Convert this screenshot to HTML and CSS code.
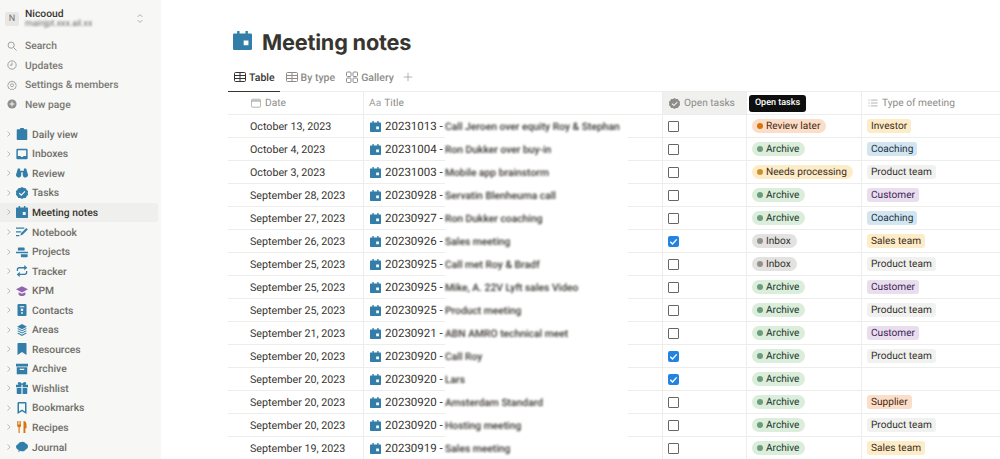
FILE: index.html
```html
<!DOCTYPE html>
<html lang="en">
<head>
<meta charset="utf-8">
<title>Meeting notes</title>
<link rel="stylesheet" href="styles.css">
</head>
<body>
<svg class="defs" width="0" height="0" aria-hidden="true">
  <defs>
    <symbol id="i-cal" viewBox="0 0 16 16"><path fill-rule="evenodd" d="M3.500 0h2v2h5V0h2v2H15a1 1 0 0 1 1 1v12a1 1 0 0 1-1 1H1a1 1 0 0 1-1-1V3a1 1 0 0 1 1-1h2.500zM9 8v4h4V8z"/></symbol>
    <symbol id="i-clip" viewBox="0 0 16 16"><path d="M5.500 0h5v1.500H14a1 1 0 0 1 1 1V15a1 1 0 0 1-1 1H2a1 1 0 0 1-1-1V2.500a1 1 0 0 1 1-1h3.500z"/></symbol>
    <symbol id="i-inbox" viewBox="0 0 16 16"><path fill-rule="evenodd" d="M2 1h12a1.500 1.500 0 0 1 1.500 1.500v11A1.500 1.500 0 0 1 14 15H2a1.500 1.500 0 0 1-1.500-1.500v-11A1.500 1.500 0 0 1 2 1zm.500 2v7.500h3.500L7 12h2l1-1.500h3.500V3z"/></symbol>
    <symbol id="i-bino" viewBox="0 0 16 16"><path d="M2.500 2h3v3h5V2h3l2.300 7.500a3.500 3.500 0 1 1-6.800 1V7H7v3.500a3.500 3.500 0 1 1-6.800-1z"/></symbol>
    <symbol id="i-badge" viewBox="0 0 16 16"><path fill-rule="evenodd" d="M8 0l2.300 1.400 2.700.1 1.300 2.400 2 1.800-.7 2.300.7 2.300-2 1.800-1.300 2.400-2.700.1L8 16l-2.300-1.400-2.700-.1-1.300-2.400-2-1.800.7-2.300L-.3 5.700l2-1.800L3 1.500l2.700-.1zM11.500 5.300L7 9.700 4.800 7.600l-1.100 1.100L7 12l5.600-5.600z"/></symbol>
    <symbol id="i-note" viewBox="0 0 16 16"><path d="M0 2h11v1.700H0zM0 7h7v1.700H0zM0 12h4.500v1.700H0zM13.700 2.500l2 2-7 7.300-3 1 1-3z"/></symbol>
    <symbol id="i-proj" viewBox="0 0 16 16"><path d="M3.500 2h7a1 1 0 0 1 1 1v3h-9V3a1 1 0 0 1 1-1zM0 7.500h16v2H0zM6.500 11h9v3a1 1 0 0 1-1 1h-7a1 1 0 0 1-1-1z"/></symbol>
    <symbol id="i-loop" viewBox="0 0 16 16"><path d="M11 0l4 3.500L11 7V4.500H4.500A1.800 1.800 0 0 0 2.700 6.300V8H1V6.300a3.500 3.500 0 0 1 3.500-3.500H11zM5 16l-4-3.500L5 9v2.500h6.500a1.800 1.800 0 0 0 1.800-1.800V8H15v1.700a3.500 3.500 0 0 1-3.500 3.500H5z"/></symbol>
    <symbol id="i-grad" viewBox="0 0 16 16"><path d="M8 1.500l8 4.200-8 4.200-8-4.200zM3.500 9.500L8 11.800l4.500-2.300V13c-1 1.200-2.700 1.800-4.500 1.800S4.500 14.200 3.500 13z"/></symbol>
    <symbol id="i-contact" viewBox="0 0 16 16"><path fill-rule="evenodd" d="M3.500 0h9A1.500 1.500 0 0 1 14 1.500v13a1.500 1.500 0 0 1-1.500 1.500h-9A1.500 1.500 0 0 1 2 14.500v-13A1.500 1.500 0 0 1 3.500 0zM5 3v1.300h6V3zM8 6a1.800 1.800 0 1 0 0 3.600A1.800 1.800 0 0 0 8 6zM6.800 11v2h2.400v-2z"/></symbol>
    <symbol id="i-stack" viewBox="0 0 16 16"><path d="M8 0l6.500 3.500L8 7 1.500 3.500zM1.500 6.300L3 5.500l5 2.700 5-2.700 1.500.8L8 9.800zM1.500 9.300l1.500-.8 5 2.700 5-2.700 1.500.8L8 12.800zM1.500 12.300l1.500-.8 5 2.700 5-2.700 1.500.8L8 16z"/></symbol>
    <symbol id="i-mark" viewBox="0 0 16 16"><path d="M3 0h10a1 1 0 0 1 1 1v15l-6-4-6 4V1a1 1 0 0 1 1-1z"/></symbol>
    <symbol id="i-box" viewBox="0 0 16 16"><path fill-rule="evenodd" d="M0 1h16v3.500H0zM1 5.500h14V15H1zM5 7.500v1.800h6V7.500z"/></symbol>
    <symbol id="i-gift" viewBox="0 0 16 16"><path d="M4 0c1.500 0 3 1 4 2.500C9 1 10.500 0 12 0c1.500 0 2 1.500 1.300 2.700-.2.300-.4.500-.7.800H16V7H8.800V3.500h-1.600V7H0V3.500h3.400c-.3-.3-.5-.5-.7-.8C2 1.500 2.500 0 4 0zM1 8h6.200v8H2a1 1 0 0 1-1-1zM8.800 8H15v7a1 1 0 0 1-1 1H8.800z"/></symbol>
    <symbol id="i-bookmark" viewBox="0 0 16 16"><path fill-rule="evenodd" d="M3.500 0h9A1.500 1.500 0 0 1 14 1.500V16l-6-3.800L2 16V1.500A1.500 1.500 0 0 1 3.500 0zM4 2v10.500l4-2.500 4 2.500V2z"/></symbol>
    <symbol id="i-fork" viewBox="0 0 16 16"><path d="M1.500 0h1v4.500h1V0h1.200v4.500h1V0h1v6a2.500 2.500 0 0 1-1.800 2.400V16H3.400V8.400A2.500 2.500 0 0 1 1.500 6zM10 0c2.500 0 4 2 4 5v4.500h-1.500V16h-2.500z"/></symbol>
    <symbol id="i-cloud" viewBox="0 0 16 16"><path d="M9 1c1.800 0 3.200 1 3.700 2.400 1.900.3 3.300 1.900 3.300 3.800 0 1.800-1.100 3.300-2.800 3.800-.7 1.700-2.400 2.800-4.400 2.800-1 0-2-.3-2.800-.8L3 15l.7-3C1.600 11.600 0 9.900 0 7.800c0-1.900 1.300-3.500 3-3.900C3.800 2.200 6 1 9 1z"/></symbol>
    <symbol id="i-check" viewBox="0 0 12 12"><path d="M2.500 6.300l2.400 2.400 4.600-5" fill="none" stroke="#fff" stroke-width="1.500"/></symbol>
    <symbol id="i-table" viewBox="0 0 12 12"><path fill="none" stroke="currentColor" d="M1.500 1.500h9a1 1 0 0 1 1 1v7a1 1 0 0 1-1 1h-9a1 1 0 0 1-1-1v-7a1 1 0 0 1 1-1zM.5 4.500h11M.5 7.500h11M6 1.500v9"/></symbol>
    <symbol id="i-gallery" viewBox="0 0 12 12"><g fill="none" stroke="currentColor"><rect x=".5" y="1" width="4.500" height="4.500" rx="1"/><rect x="7" y="1" width="4.500" height="4.500" rx="1"/><rect x=".5" y="7" width="4.500" height="4.500" rx="1"/><rect x="7" y="7" width="4.500" height="4.500" rx="1"/></g></symbol>
    <symbol id="i-chev" viewBox="0 0 8 10"><path d="M2 1.500L5.500 5 2 8.500" fill="none" stroke="currentColor" stroke-width="1"/></symbol>
  </defs>
</svg>

<div class="app">
  <aside class="sidebar">
    <div class="workspace">
      <span class="ws-badge">N</span>
      <div class="ws-text">
        <div class="ws-name">Nicooud</div>
        <div class="ws-mail">mainjpt.xxx.ail.xx</div>
      </div>
      <svg class="ws-switch" viewBox="0 0 10 14"><path d="M2 5l3-3 3 3M2 9l3 3 3-3" fill="none" stroke="currentColor"/></svg>
    </div>
    <nav class="quick">
      <a class="quick-item"><svg class="q-icon" viewBox="0 0 12 12"><circle cx="5" cy="5" r="3.700" fill="none" stroke="currentColor"/><path d="M8 8l3.500 3.500" stroke="currentColor"/></svg>Search</a>
      <a class="quick-item"><svg class="q-icon" viewBox="0 0 12 12"><circle cx="6" cy="6" r="5" fill="none" stroke="currentColor"/><path d="M6 3v3.200H3.500" fill="none" stroke="currentColor"/></svg>Updates</a>
      <a class="quick-item"><svg class="q-icon" viewBox="0 0 12 12"><path d="M6 1l1 1.300 1.700-.3.500 1.600 1.600.6-.4 1.600L11.500 7l-1.200 1.200.1 1.600-1.600.3L7.700 11.500 6 11l-1.700.5-1.100-1.400-1.600-.3.100-1.600L.5 7l1.100-1.200-.4-1.600 1.600-.6.500-1.600 1.700.3z" fill="none" stroke="currentColor" stroke-width=".9"/><circle cx="6" cy="6.300" r="1.800" fill="none" stroke="currentColor" stroke-width=".9"/></svg>Settings &amp; members</a>
      <a class="quick-item"><svg class="q-icon" viewBox="0 0 12 12"><circle cx="6" cy="6" r="5.500" fill="currentColor"/><path d="M6 3v6M3 6h6" stroke="#f7f7f5" stroke-width="1.200"/></svg>New page</a>
    </nav>
    <nav class="tree">
      <a class="tree-item"><svg class="chev"><use href="#i-chev"/></svg><svg class="t-icon blue"><use href="#i-clip"/></svg>Daily view</a>
      <a class="tree-item"><svg class="chev"><use href="#i-chev"/></svg><svg class="t-icon blue"><use href="#i-inbox"/></svg>Inboxes</a>
      <a class="tree-item"><svg class="chev"><use href="#i-chev"/></svg><svg class="t-icon blue"><use href="#i-bino"/></svg>Review</a>
      <a class="tree-item"><svg class="chev"><use href="#i-chev"/></svg><svg class="t-icon blue"><use href="#i-badge"/></svg>Tasks</a>
      <a class="tree-item active"><svg class="chev"><use href="#i-chev"/></svg><svg class="t-icon blue"><use href="#i-cal"/></svg>Meeting notes</a>
      <a class="tree-item"><svg class="chev"><use href="#i-chev"/></svg><svg class="t-icon blue"><use href="#i-note"/></svg>Notebook</a>
      <a class="tree-item"><svg class="chev"><use href="#i-chev"/></svg><svg class="t-icon blue"><use href="#i-proj"/></svg>Projects</a>
      <a class="tree-item"><svg class="chev"><use href="#i-chev"/></svg><svg class="t-icon blue"><use href="#i-loop"/></svg>Tracker</a>
      <a class="tree-item"><svg class="chev"><use href="#i-chev"/></svg><svg class="t-icon purple"><use href="#i-grad"/></svg>KPM</a>
      <a class="tree-item"><svg class="chev"><use href="#i-chev"/></svg><svg class="t-icon blue"><use href="#i-contact"/></svg>Contacts</a>
      <a class="tree-item"><svg class="chev"><use href="#i-chev"/></svg><svg class="t-icon blue"><use href="#i-stack"/></svg>Areas</a>
      <a class="tree-item"><svg class="chev"><use href="#i-chev"/></svg><svg class="t-icon blue"><use href="#i-mark"/></svg>Resources</a>
      <a class="tree-item"><svg class="chev"><use href="#i-chev"/></svg><svg class="t-icon blue"><use href="#i-box"/></svg>Archive</a>
      <a class="tree-item"><svg class="chev"><use href="#i-chev"/></svg><svg class="t-icon blue"><use href="#i-gift"/></svg>Wishlist</a>
      <a class="tree-item"><svg class="chev"><use href="#i-chev"/></svg><svg class="t-icon blue"><use href="#i-bookmark"/></svg>Bookmarks</a>
      <a class="tree-item"><svg class="chev"><use href="#i-chev"/></svg><svg class="t-icon orange"><use href="#i-fork"/></svg>Recipes</a>
      <a class="tree-item"><svg class="chev"><use href="#i-chev"/></svg><svg class="t-icon blue"><use href="#i-cloud"/></svg>Journal</a>
    </nav>
  </aside>

  <main class="main">
    <header class="page-head">
      <svg class="page-icon blue"><use href="#i-cal"/></svg>
      <h1 class="page-title">Meeting notes</h1>
    </header>
    <div class="tabs">
      <a class="tab on"><svg class="tab-icon"><use href="#i-table"/></svg>Table</a>
      <a class="tab"><svg class="tab-icon"><use href="#i-table"/></svg>By type</a>
      <a class="tab"><svg class="tab-icon"><use href="#i-gallery"/></svg>Gallery</a>
      <svg class="tab-plus" viewBox="0 0 12 12"><path d="M6 1v10M1 6h10" stroke="currentColor"/></svg>
    </div>

    <div class="table">
      <div class="row head">
        <div class="cell date"><svg class="h-icon" viewBox="0 0 12 12"><rect x=".5" y="1.500" width="11" height="9.500" rx="1.500" fill="none" stroke="currentColor"/><path d="M.5 3.500h11" stroke="currentColor" stroke-width="1.500"/></svg>Date</div>
        <div class="cell title-h"><span class="aa">Aa</span>Title</div>
        <div class="cell tasks-h"><svg class="h-icon solid"><use href="#i-badge"/></svg>Open tasks</div>
        <div class="cell status-h"><span class="tooltip">Open tasks</span></div>
        <div class="cell type-h"><svg class="h-icon" viewBox="0 0 12 12"><path d="M.5 2.500h1.500M.5 6h1.500M.5 9.500h1.500M3.500 2.500h8M3.500 6h8M3.500 9.500h8" stroke="currentColor"/></svg>Type of meeting</div>
      </div>

      <div class="row"><div class="cell date">October 13, 2023</div><div class="cell title"><svg class="r-icon blue"><use href="#i-cal"/></svg>20231013 -<span class="blur-zone"><span class="blurred">Call Jeroen over equity Roy &amp; Stephan</span></span></div><div class="cell check"><span class="box"></span></div><div class="cell"><span class="pill orange-p"><i class="dot"></i>Review later</span></div><div class="cell"><span class="tag t-yellow">Investor</span></div></div>
      <div class="row"><div class="cell date">October 4, 2023</div><div class="cell title"><svg class="r-icon blue"><use href="#i-cal"/></svg>20231004 -<span class="blur-zone"><span class="blurred">Ron Dukker over buy-in</span></span></div><div class="cell check"><span class="box"></span></div><div class="cell"><span class="pill green-p"><i class="dot"></i>Archive</span></div><div class="cell"><span class="tag t-blue">Coaching</span></div></div>
      <div class="row"><div class="cell date">October 3, 2023</div><div class="cell title"><svg class="r-icon blue"><use href="#i-cal"/></svg>20231003 -<span class="blur-zone"><span class="blurred">Mobile app brainstorm</span></span></div><div class="cell check"><span class="box"></span></div><div class="cell"><span class="pill yellow-p"><i class="dot"></i>Needs processing</span></div><div class="cell"><span class="tag t-gray">Product team</span></div></div>
      <div class="row"><div class="cell date">September 28, 2023</div><div class="cell title"><svg class="r-icon blue"><use href="#i-cal"/></svg>20230928 -<span class="blur-zone"><span class="blurred">Servatin Blenheuma call</span></span></div><div class="cell check"><span class="box"></span></div><div class="cell"><span class="pill green-p"><i class="dot"></i>Archive</span></div><div class="cell"><span class="tag t-purple">Customer</span></div></div>
      <div class="row"><div class="cell date">September 27, 2023</div><div class="cell title"><svg class="r-icon blue"><use href="#i-cal"/></svg>20230927 -<span class="blur-zone"><span class="blurred">Ron Dukker coaching</span></span></div><div class="cell check"><span class="box"></span></div><div class="cell"><span class="pill green-p"><i class="dot"></i>Archive</span></div><div class="cell"><span class="tag t-blue">Coaching</span></div></div>
      <div class="row"><div class="cell date">September 26, 2023</div><div class="cell title"><svg class="r-icon blue"><use href="#i-cal"/></svg>20230926 -<span class="blur-zone"><span class="blurred">Sales meeting</span></span></div><div class="cell check"><span class="box on"><svg><use href="#i-check"/></svg></span></div><div class="cell"><span class="pill gray-p"><i class="dot"></i>Inbox</span></div><div class="cell"><span class="tag t-yellow">Sales team</span></div></div>
      <div class="row"><div class="cell date">September 25, 2023</div><div class="cell title"><svg class="r-icon blue"><use href="#i-cal"/></svg>20230925 -<span class="blur-zone"><span class="blurred">Call met Roy &amp; Bradf</span></span></div><div class="cell check"><span class="box"></span></div><div class="cell"><span class="pill gray-p"><i class="dot"></i>Inbox</span></div><div class="cell"><span class="tag t-gray">Product team</span></div></div>
      <div class="row"><div class="cell date">September 25, 2023</div><div class="cell title"><svg class="r-icon blue"><use href="#i-cal"/></svg>20230925 -<span class="blur-zone"><span class="blurred">Mike, A. 22V Lyft sales Video</span></span></div><div class="cell check"><span class="box"></span></div><div class="cell"><span class="pill green-p"><i class="dot"></i>Archive</span></div><div class="cell"><span class="tag t-purple">Customer</span></div></div>
      <div class="row"><div class="cell date">September 25, 2023</div><div class="cell title"><svg class="r-icon blue"><use href="#i-cal"/></svg>20230925 -<span class="blur-zone"><span class="blurred">Product meeting</span></span></div><div class="cell check"><span class="box"></span></div><div class="cell"><span class="pill green-p"><i class="dot"></i>Archive</span></div><div class="cell"><span class="tag t-gray">Product team</span></div></div>
      <div class="row"><div class="cell date">September 21, 2023</div><div class="cell title"><svg class="r-icon blue"><use href="#i-cal"/></svg>20230921 -<span class="blur-zone"><span class="blurred">ABN AMRO technical meet</span></span></div><div class="cell check"><span class="box"></span></div><div class="cell"><span class="pill green-p"><i class="dot"></i>Archive</span></div><div class="cell"><span class="tag t-purple">Customer</span></div></div>
      <div class="row"><div class="cell date">September 20, 2023</div><div class="cell title"><svg class="r-icon blue"><use href="#i-cal"/></svg>20230920 -<span class="blur-zone"><span class="blurred">Call Roy</span></span></div><div class="cell check"><span class="box on"><svg><use href="#i-check"/></svg></span></div><div class="cell"><span class="pill green-p"><i class="dot"></i>Archive</span></div><div class="cell"><span class="tag t-gray">Product team</span></div></div>
      <div class="row"><div class="cell date">September 20, 2023</div><div class="cell title"><svg class="r-icon blue"><use href="#i-cal"/></svg>20230920 -<span class="blur-zone"><span class="blurred">Lars</span></span></div><div class="cell check"><span class="box on"><svg><use href="#i-check"/></svg></span></div><div class="cell"><span class="pill green-p"><i class="dot"></i>Archive</span></div><div class="cell"></div></div>
      <div class="row"><div class="cell date">September 20, 2023</div><div class="cell title"><svg class="r-icon blue"><use href="#i-cal"/></svg>20230920 -<span class="blur-zone"><span class="blurred">Amsterdam Standard</span></span></div><div class="cell check"><span class="box"></span></div><div class="cell"><span class="pill green-p"><i class="dot"></i>Archive</span></div><div class="cell"><span class="tag t-orange">Supplier</span></div></div>
      <div class="row"><div class="cell date">September 20, 2023</div><div class="cell title"><svg class="r-icon blue"><use href="#i-cal"/></svg>20230920 -<span class="blur-zone"><span class="blurred">Hosting meeting</span></span></div><div class="cell check"><span class="box"></span></div><div class="cell"><span class="pill green-p"><i class="dot"></i>Archive</span></div><div class="cell"><span class="tag t-gray">Product team</span></div></div>
      <div class="row"><div class="cell date">September 19, 2023</div><div class="cell title"><svg class="r-icon blue"><use href="#i-cal"/></svg>20230919 -<span class="blur-zone"><span class="blurred">Sales meeting</span></span></div><div class="cell check"><span class="box"></span></div><div class="cell"><span class="pill green-p"><i class="dot"></i>Archive</span></div><div class="cell"><span class="tag t-yellow">Sales team</span></div></div>
    </div>
  </main>
</div>
</body>
</html>
```

FILE: styles.css
```css
* { box-sizing: border-box; }
html, body { margin: 0; padding: 0; height: 459px; overflow: hidden; background: #fff; }
body { font-family: Roboto, Inter, "Liberation Sans", sans-serif; font-size: 10.700px; color: #37352f; text-rendering: geometricPrecision; }
.defs { position: absolute; }
.blue { color: #337ea9; fill: #337ea9; }
.purple { color: #9065b0; fill: #9065b0; }
.orange { color: #d9730d; fill: #d9730d; }

.app { display: flex; height: 459px; }

.sidebar { width: 161px; flex: none; background: #f7f7f5; color: #6b6a66; overflow: hidden; font-size: 10.300px; }
.workspace { display: flex; align-items: center; height: 36px; padding: 0 17px 0 5px; }
.ws-badge { width: 14px; height: 14px; flex: none; background: #e8e7e4; border-radius: 2px; color: #76746f; font-size: 9px; display: flex; align-items: center; justify-content: center; margin-top: 1px; }
.ws-text { flex: 1; margin-left: 6px; }
.ws-name { font-size: 10.300px; font-weight: 500; color: #37352f; line-height: 13px; }
.ws-mail { font-size: 8.800px; line-height: 9px; filter: blur(.8px); color: #6b6a66; white-space: nowrap; }
.ws-switch { width: 8px; height: 11px; color: #9b9a97; flex: none; }

.quick { display: flex; flex-direction: column; }
.quick-item { height: 19.500px; display: flex; align-items: center; padding-left: 7px; font-weight: 500; color: #7a7974; }
.q-icon { width: 10px; height: 10px; margin-right: 8px; color: #8f8e8a; flex: none; }

.tree { display: flex; flex-direction: column; margin-top: 10.500px; }
.tree-item { height: 19.560px; display: flex; align-items: center; padding-left: 6px; font-weight: 500; color: #6f6e69; width: 158px; border-radius: 0 3px 3px 0; }
.tree-item.active { background: #efefed; color: #37352f; }
.chev { width: 6px; height: 8px; color: #a5a4a0; flex: none; }
.t-icon { width: 12px; height: 12px; margin: 0 4px; flex: none; }

.main { flex: 1; min-width: 0; padding-left: 67px; }
.page-head { display: flex; align-items: center; height: 30px; margin-top: 28px; padding-left: 5px; }
.page-icon { width: 19px; height: 19px; flex: none; margin-bottom: 5px; }
.page-title { margin: 0 0 0 10px; font-family: Inter, "Liberation Sans", sans-serif; font-size: 21.700px; line-height: 30px; font-weight: 700; letter-spacing: -.2px; color: #37352f; }

.tabs { display: flex; align-items: center; height: 34px; padding-top: 5px; border-bottom: 1px solid #ededeb; color: #8d8c88; font-weight: 500; font-size: 10.500px; }
.tab { display: flex; align-items: center; height: 100%; padding: 0 5px 0 6px; position: relative; }
.tab.on { color: #37352f; box-shadow: 0 1px 0 #37352f; }
.tab-icon { width: 12px; height: 12px; margin-right: 3px; flex: none; }
.tab-plus { width: 10px; height: 10px; color: #a5a4a0; margin-left: 4px; }

.table { display: flex; flex-direction: column; }
.row { display: grid; grid-template-columns: 135px 299px 84px 115px 139px; height: 23px; border-bottom: 1px solid #ededeb; align-items: stretch; }
.cell { display: flex; align-items: center; position: relative; min-width: 0; border-left: 1px solid #ededeb; padding-left: 5px; white-space: nowrap; }
.cell.date { border-left: 0; padding-left: 22px; }
.row.head { color: #8d8c88; font-weight: 400; font-size: 10.200px; }
.h-icon { width: 10px; height: 10px; margin-right: 4px; color: #a5a4a0; flex: none; }
.h-icon.solid { fill: #8d8c88; width: 11px; height: 11px; }
.row.head .date { padding-left: 23px; }
.aa { color: #a5a4a0; margin-right: 3px; }
.tasks-h { background: #f0f0ee; padding-left: 6px; }
.type-h { padding-left: 6px; }
.tooltip { background: #0f0f0f; color: #fff; font-size: 9px; font-weight: 500; height: 17px; width: 57px; border-radius: 3px; display: flex; align-items: center; justify-content: center; margin-left: -3px; }

.title { padding-left: 6px; font-size: 11.500px; }
.r-icon { width: 11px; height: 11px; margin-right: 4px; flex: none; }
.blur-zone { position: absolute; left: 81px; width: 183px; top: 0; bottom: -1px; background: #fff; display: flex; align-items: center; }
.blurred { filter: blur(.8px); color: #37352f; font-size: 10.300px; font-weight: 500; }

.box { width: 11px; height: 11px; border: 1.500px solid #666; border-radius: 1px; display: block; }
.box.on { background: #2383e2; border: 0; border-radius: 2px; }
.box.on svg { width: 11px; height: 11px; display: block; }

.pill { display: inline-flex; align-items: center; height: 14px; border-radius: 7px; padding: 0 6px 0 5px; font-size: 10.100px; }
.dot { width: 6px; height: 6px; border-radius: 50%; margin-right: 3px; flex: none; }
.orange-p { background: #fadec9; color: #49290e; }
.orange-p .dot { background: #d9730d; }
.green-p { background: #dbeddb; color: #1c3829; }
.green-p .dot { background: #6c9b7d; }
.yellow-p { background: #fdecc8; color: #402c1b; }
.yellow-p .dot { background: #cb912f; }
.gray-p { background: #e3e2e0; color: #32302c; }
.gray-p .dot { background: #91918e; }

.tag { display: inline-flex; align-items: center; height: 14px; padding: 0 4px; border-radius: 3px; font-size: 10.100px; }
.t-yellow { background: #fdecc8; color: #402c1b; }
.t-blue { background: #d3e5ef; color: #183347; }
.t-gray { background: #f1f1ef; color: #32302c; }
.t-purple { background: #e8deee; color: #412454; }
.t-orange { background: #fadec9; color: #49290e; }
```
